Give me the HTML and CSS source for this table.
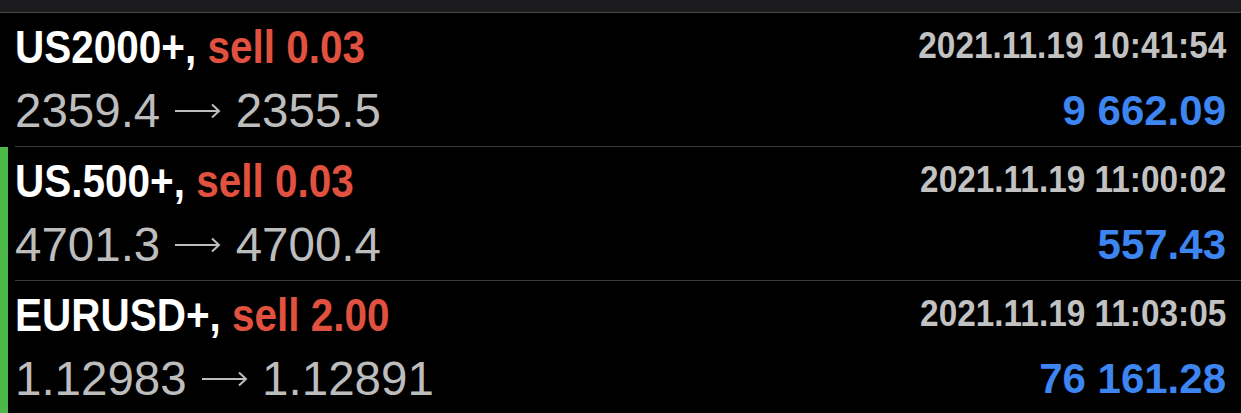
FILE: index.html
```html
<!DOCTYPE html>
<html lang="en">

<head>
    <meta charset="UTF-8">
    <meta name="viewport" content="width=device-width, initial-scale=1.0">
    <title>Trades</title>
    <link rel="stylesheet" href="styles.css">
</head>

<body>
    <div class="topbar"></div>

    <ul class="trades">
        <li class="trade">
            <div class="body">
                <div class="left">
                    <div class="title">US2000+, <span class="side">sell 0.03</span></div>
                    <div class="prices">2359.4 <svg class="arrow" viewBox="0 0 47 16"><path d="M1 8H45M38 1.5L45 8L38 14.5"/></svg> 2355.5</div>
                </div>
                <div class="right">
                    <div class="time">2021.11.19 10:41:54</div>
                    <div class="profit">9 662.09</div>
                </div>
            </div>
        </li>
        <li class="trade active">
            <div class="body">
                <div class="left">
                    <div class="title">US.500+, <span class="side">sell 0.03</span></div>
                    <div class="prices">4701.3 <svg class="arrow" viewBox="0 0 47 16"><path d="M1 8H45M38 1.5L45 8L38 14.5"/></svg> 4700.4</div>
                </div>
                <div class="right">
                    <div class="time">2021.11.19 11:00:02</div>
                    <div class="profit">557.43</div>
                </div>
            </div>
        </li>
        <li class="trade active">
            <div class="body">
                <div class="left">
                    <div class="title">EURUSD+, <span class="side">sell 2.00</span></div>
                    <div class="prices">1.12983 <svg class="arrow" viewBox="0 0 47 16"><path d="M1 8H45M38 1.5L45 8L38 14.5"/></svg> 1.12891</div>
                </div>
                <div class="right">
                    <div class="time">2021.11.19 11:03:05</div>
                    <div class="profit">76 161.28</div>
                </div>
            </div>
        </li>
    </ul>
</body>

</html>
```

FILE: styles.css
```css
* {
    box-sizing: border-box;
}

body {
    margin: 0;
    background-color: #000;
    font-family: "Liberation Sans", Arial, sans-serif;
    overflow: hidden;
}

.topbar {
    height: 13px;
    background-color: #1c1c1e;
    border-bottom: 1px solid #48484a;
}

.trades {
    margin: 0;
    padding: 0;
    list-style: none;
}

/* 左侧绿色条 */
.trade {
    border-left: 8px solid #000;
}

.trade.active {
    border-left-color: #4cb848;
}

.body {
    display: flex;
    justify-content: space-between;
    margin-left: 7px;
    padding: 3px 15px 0 0;
    height: 134px;
    border-bottom: 1px solid #3a3a3c;
}

.trade:last-child .body {
    border-bottom: 0;
}

/* 粗体窄字 */
.title {
    font-weight: 700;
    font-size: 46px;
    line-height: 63px;
    color: #fff;
    white-space: nowrap;
    transform: scaleX(0.88);
    transform-origin: left center;
}

.side {
    color: #e0513f;
}

.prices {
    font-size: 47.5px;
    line-height: 63px;
    color: #bdbdbd;
    white-space: nowrap;
}

.arrow {
    width: 47px;
    height: 16px;
    margin: 0 1px;
    vertical-align: 8px;
    fill: none;
    stroke: #bdbdbd;
    stroke-width: 2;
}

.right {
    text-align: right;
}

.time {
    font-weight: 700;
    font-size: 36px;
    line-height: 59px;
    color: #c2c2c2;
    white-space: nowrap;
    transform: scaleX(0.927);
    transform-origin: right center;
}

.profit {
    font-weight: 700;
    font-size: 42px;
    line-height: 71px;
    color: #3d85f0;
    white-space: nowrap;
}
```
